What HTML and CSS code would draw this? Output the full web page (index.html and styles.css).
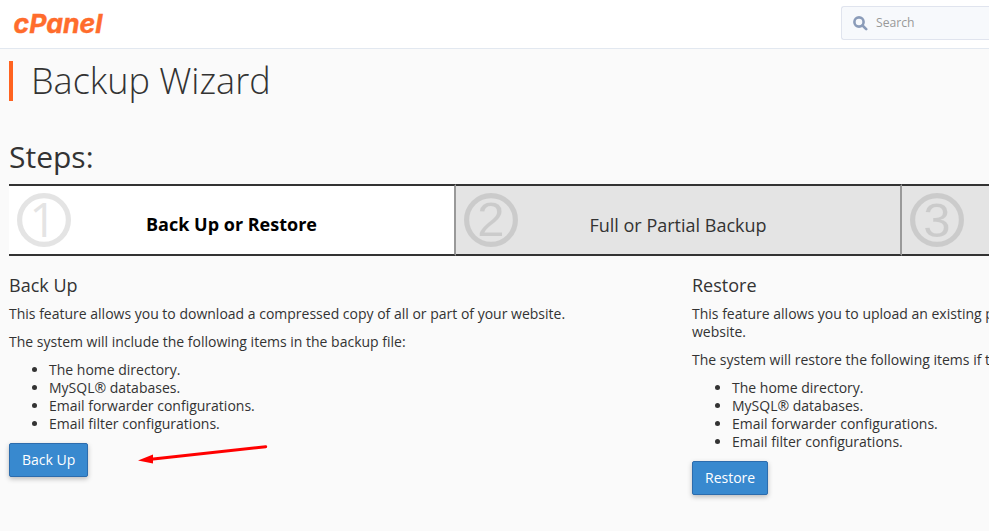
FILE: index.html
```html
<!DOCTYPE html>
<html lang="en">
<head>
<meta charset="utf-8">
<title>Backup Wizard</title>
<link rel="stylesheet" href="styles.css">
</head>
<body>
<header class="topbar">
  <svg class="logo" width="120" height="46" viewBox="0 0 120 46" role="img" aria-label="cPanel">
    <text class="logo-text" x="13.5" y="32.5" textLength="89" lengthAdjust="spacingAndGlyphs">cPanel</text>
  </svg>
  <div class="search">
    <svg class="search-icon" width="15" height="15" viewBox="0 0 15 15"><circle cx="6" cy="6" r="4.6"/><path d="M9.5 9.5L13.2 13.2"/></svg>
    <span>Search</span>
  </div>
</header>
<main class="page">
  <h1 class="title">Backup Wizard</h1>
  <h2 class="steps-title">Steps:</h2>
  <div class="steps">
    <div class="step active">
      <svg class="num" width="54" height="54" viewBox="0 0 54 54"><circle cx="27" cy="27" r="24.4"/><text class="one" x="26" y="44">1</text></svg>
      <span class="label">Back Up or Restore</span>
    </div>
    <div class="step">
      <svg class="num" width="54" height="54" viewBox="0 0 54 54"><circle cx="27" cy="27" r="24.4"/><text x="27" y="43">2</text></svg>
      <span class="label">Full or Partial Backup</span>
    </div>
    <div class="step">
      <svg class="num" width="54" height="54" viewBox="0 0 54 54"><circle cx="27" cy="27" r="24.4"/><text x="27" y="44">3</text></svg>
    </div>
  </div>
  <div class="columns">
    <section class="column">
      <h3>Back Up</h3>
      <p>This feature allows you to download a compressed copy of all or part of your website.</p>
      <p>The system will include the following items in the backup file:</p>
      <ul>
        <li>The home directory.</li>
        <li>MySQL® databases.</li>
        <li>Email forwarder configurations.</li>
        <li>Email filter configurations.</li>
      </ul>
      <div class="action">
        <button class="btn">Back Up</button>
        <svg class="arrow" width="132" height="24" viewBox="0 0 132 24"><path class="shaft" d="M13 16.3L127.7 3.7"/><path class="head" d="M0 17.5L15 11.5V20.5Z"/></svg>
      </div>
    </section>
    <section class="column">
      <h3>Restore</h3>
      <p>This feature allows you to upload an existing p<br>website.</p>
      <p>The system will restore the following items if t</p>
      <ul>
        <li>The home directory.</li>
        <li>MySQL® databases.</li>
        <li>Email forwarder configurations.</li>
        <li>Email filter configurations.</li>
      </ul>
      <div class="action">
        <button class="btn">Restore</button>
      </div>
    </section>
  </div>
</main>
</body>
</html>
```
FILE: styles.css
```css
* { box-sizing: border-box; }
body {
  margin: 0;
  height: 531px;
  overflow: hidden;
  background: #fafafa;
  color: #333;
  font: 14px/18px "Open Sans", sans-serif;
}
.topbar {
  display: flex;
  justify-content: space-between;
  height: 49px;
  background: #fff;
  border-bottom: 1px solid #e2e8f0;
}
.logo { display: block; overflow: visible; }
.logo-text {
  fill: #ff6c2c;
  stroke: #ff6c2c;
  stroke-width: .4px;
  font: italic 700 26px Inter, "Open Sans", sans-serif;
}
.search {
  display: flex;
  align-items: center;
  gap: 8px;
  width: 148px;
  height: 34px;
  margin-top: 6px;
  padding-left: 11px;
  background: #f7f9fc;
  border: 1px solid #e0e4ee;
  border-right: 0;
  border-radius: 3px 0 0 3px;
  color: #999;
  font-size: 12.2px;
}
.search-icon { fill: none; stroke: #8b9cb9; stroke-width: 2.6px; stroke-linecap: round; }
.page { padding: 12px 0 0 9px; }
.title {
  height: 40px;
  margin: 0;
  padding-left: 18px;
  border-left: 4px solid #ff6320;
  font-size: 36px;
  line-height: 39px;
  font-weight: 300;
}
.steps-title {
  margin: 39px 0 0;
  font-size: 30px;
  line-height: 34px;
  font-weight: 400;
}
.steps {
  display: grid;
  grid-template-columns: 447px 446px 87px;
  height: 72px;
  margin-top: 10px;
}
.step {
  display: flex;
  align-items: center;
  padding-left: 8px;
  background: #e4e4e4;
  border-top: 2px solid #333;
  border-bottom: 2px solid #333;
  border-right: 2px solid #999;
  font-size: 18px;
}
.step:last-child { border-right: 0; }
.step.active { background: #fff; color: #000; font-weight: 700; }
.num { flex: none; opacity: .1; }
.num circle { fill: none; stroke: #000; stroke-width: 5.2px; }
.num text { font: 400 49px "Liberation Sans", sans-serif; text-anchor: middle; }
.num .one { font-family: "Open Sans", sans-serif; font-size: 48px; }
.label {
  flex: 1;
  padding: 10px 62px 0 0;
  text-align: center;
}
.active .label { padding-top: 8px; }
.columns { display: grid; grid-template-columns: 683px 297px; margin-top: 19px; }
.column { white-space: nowrap; }
h3 { margin: 0 0 9px; font-size: 18px; line-height: 21px; font-weight: 400; }
p { margin: 0 0 10px; }
ul { margin: 0 0 10px; padding-left: 40px; }
.action { display: flex; gap: 50px; }
.btn {
  height: 34px;
  padding: 0 12px;
  background: #3889cf;
  border: 1px solid #2c6cad;
  border-radius: 2px;
  box-shadow: 0 2px 5px rgba(0, 0, 0, .25);
  color: #fff;
  font: 14px/20px "Open Sans", sans-serif;
}
.arrow { display: block; }
.shaft { stroke: #f00; stroke-width: 3px; stroke-linecap: round; }
.head { fill: #f00; }
```
